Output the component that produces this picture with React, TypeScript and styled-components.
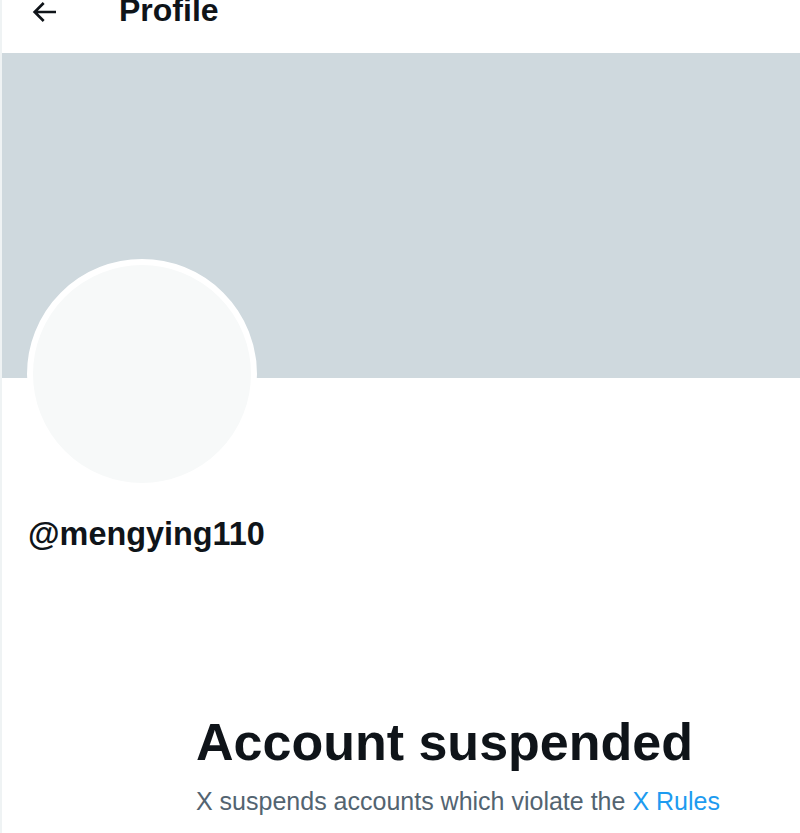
import React from "react";
import styled, { createGlobalStyle } from "styled-components";

const Global = createGlobalStyle`
  html, body { margin: 0; padding: 0; background: #ffffff; }
  body { font-family: "Liberation Sans", Arial, sans-serif; color: #0f1419; }
`;

const Page = styled.div`
  min-height: 833px;
  border-left: 2px solid #eff3f4;
  overflow: hidden;
`;

const Header = styled.header`
  height: 53px;
  overflow: hidden;
`;

const HeaderRow = styled.div`
  display: flex;
  align-items: center;
  height: 32px;
  margin-top: -4px;
  padding-left: 26px;
  gap: 59px;
`;

const BackIcon = styled.svg`
  width: 32px;
  height: 32px;
  fill: #0f1419;
  flex: none;
`;

const Title = styled.h2`
  margin: 0;
  font-size: 32px;
  line-height: 32px;
  font-weight: 700;
  position: relative;
  top: -2px;
`;

const Banner = styled.div`
  height: 325px;
  background: #cfd9de;
`;

const Info = styled.div`
  padding-left: 25px;
`;

const Avatar = styled.div`
  width: 230px;
  height: 230px;
  margin-top: -119px;
  box-sizing: border-box;
  border-radius: 50%;
  border: 6px solid #ffffff;
  background: #f7f9f9;
`;

const Handle = styled.div`
  margin-top: 25px;
  padding-left: 1px;
  font-size: 32.4px;
  line-height: 40px;
  font-weight: 700;
  color: #0f1419;
`;

const Suspended = styled.section`
  margin-top: 158px;
  padding-left: 194px;
  display: flex;
  flex-direction: column;
  gap: 13px;
`;

const SuspendedTitle = styled.h1`
  margin: 0;
  font-size: 52px;
  line-height: 60px;
  font-weight: 700;
  color: #0f1419;
  white-space: nowrap;
`;

const SuspendedText = styled.p`
  margin: 0;
  font-size: 25px;
  line-height: 32px;
  color: #536471;
  white-space: nowrap;
`;

const RulesLink = styled.a`
  color: #1d9bf0;
  text-decoration: none;
`;

export default function App() {
  return (
    <>
      <Global />
      <Page>
        <Header>
          <HeaderRow>
            <BackIcon viewBox="0 0 24 24" aria-hidden="true">
              <path d="M7.414 13l5.043 5.04-1.414 1.42L3.586 12l7.457-7.46 1.414 1.42L7.414 11H21v2H7.414z" />
            </BackIcon>
            <Title>Profile</Title>
          </HeaderRow>
        </Header>
        <Banner />
        <Info>
          <Avatar />
          <Handle>@mengying110</Handle>
        </Info>
        <Suspended>
          <SuspendedTitle>Account suspended</SuspendedTitle>
          <SuspendedText>
            X suspends accounts which violate the <RulesLink href="#">X Rules</RulesLink>
          </SuspendedText>
        </Suspended>
      </Page>
    </>
  );
}
